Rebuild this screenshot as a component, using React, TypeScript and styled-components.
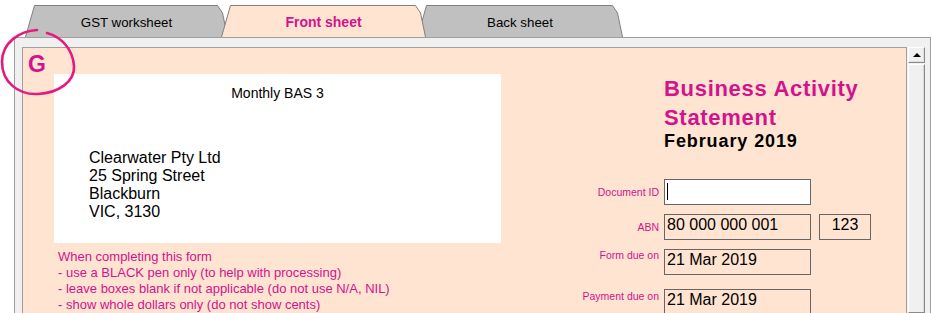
import React from "react";
import styled, { createGlobalStyle } from "styled-components";

const PINK = "#D2138C";
const PEACH = "#FFE4D1";
const LINE = "#A0A0A0";

const GlobalStyle = createGlobalStyle`
  html, body { margin: 0; padding: 0; background: #fff; overflow: hidden; }
  body { font-family: "Liberation Sans", Arial, sans-serif; color: #000; }
`;

const Page = styled.div`
  position: relative;
  width: 932px;
  height: 313px;
  overflow: hidden;
`;

const TabStrip = styled.div`
  display: flex;
  align-items: flex-end;
  height: 37px;
  padding-left: 25px;
  box-sizing: border-box;
`;

const Tab = styled.div<{ $w: number; $overlap: number; $active?: boolean }>`
  position: relative;
  width: ${(p) => p.$w}px;
  height: 32px;
  margin-left: ${(p) => -p.$overlap}px;
  z-index: ${(p) => (p.$active ? 2 : 1)};
  display: flex;
  align-items: center;
  justify-content: center;
  padding-top: 2px;
  box-sizing: border-box;
  font-size: ${(p) => (p.$active ? 14 : 13.3)}px;
  font-weight: ${(p) => (p.$active ? 700 : 400)};
  color: ${(p) => (p.$active ? PINK : "#000")};
`;

const TabShape = styled.svg`
  position: absolute;
  left: 0;
  top: 0;
  overflow: visible;
`;

const TabLabel = styled.span`
  position: relative;
`;

const Frame = styled.div`
  margin-left: 14px;
  width: 917px;
  height: 276px;
  box-sizing: border-box;
  border: 1px solid ${LINE};
  border-bottom: none;
  background: #f0f0f0;
  padding: 9px 5px 0 7px;
  display: flex;
  gap: 1px;
`;

const Panel = styled.div`
  flex: 0 0 885px;
  box-sizing: border-box;
  border: 1px solid ${LINE};
  border-bottom: none;
  background: ${PEACH};
  display: flex;
`;

const LeftCol = styled.div`
  width: 478px;
  display: flex;
  flex-direction: column;
`;

const GMark = styled.div`
  height: 26px;
  box-sizing: border-box;
  padding: 5px 0 0 5px;
  font-size: 23px;
  line-height: 23px;
  font-weight: 700;
  color: ${PINK};
`;

const AddressBox = styled.div`
  margin-left: 31px;
  width: 447px;
  height: 169px;
  box-sizing: border-box;
  background: #fff;
  padding-top: 11px;
`;

const BoxTitle = styled.div`
  text-align: center;
  font-size: 14px;
  line-height: 16px;
`;

const Address = styled.div`
  margin-top: 48px;
  padding-left: 35px;
  font-size: 16px;
  line-height: 18px;
`;

const Instructions = styled.div`
  margin: 6px 0 0 35px;
  font-size: 13px;
  line-height: 16px;
  color: ${PINK};
  white-space: nowrap;
`;

const RightCol = styled.div`
  flex: 1;
  padding-top: 26px;
  display: flex;
  flex-direction: column;
`;

const Title = styled.div`
  margin-left: 163px;
  font-size: 22px;
  line-height: 29px;
  font-weight: 700;
  letter-spacing: 0.7px;
  color: ${PINK};
`;

const Period = styled.div`
  margin: -1px 0 0 163px;
  font-size: 18px;
  line-height: 20px;
  font-weight: 700;
  letter-spacing: 0.9px;
`;

const FormRow = styled.div<{ $top: number; $align: "center" | "flex-start" }>`
  display: flex;
  align-items: ${(p) => p.$align};
  margin-top: ${(p) => p.$top}px;
`;

const Label = styled.div<{ $pad?: number }>`
  width: 158px;
  margin-right: 5px;
  padding-top: ${(p) => p.$pad ?? 0}px;
  text-align: right;
  font-size: 10.5px;
  line-height: 13px;
  color: ${PINK};
  white-space: nowrap;
`;

const Field = styled.div<{ $white?: boolean; $w?: number; $center?: boolean; $gap?: number }>`
  width: ${(p) => p.$w ?? 147}px;
  height: 26px;
  margin-left: ${(p) => p.$gap ?? 0}px;
  box-sizing: border-box;
  border: 1px solid #666;
  background: ${(p) => (p.$white ? "#fff" : "transparent")};
  padding: 1px 2px 0;
  font-size: 16px;
  line-height: 18px;
  text-align: ${(p) => (p.$center ? "center" : "left")};
  white-space: nowrap;
`;

const Caret = styled.div`
  width: 1px;
  height: 17px;
  margin-top: 2px;
  background: #000;
`;

const ScrollCol = styled.div`
  width: 17px;
  display: flex;
  flex-direction: column;
  gap: 1px;
`;

const ScrollButton = styled.div`
  height: 16px;
  box-sizing: border-box;
  background: #f0f0f0;
  border: 1px solid;
  border-color: #fff #8a8a8a #8a8a8a #fff;
  box-shadow: inset -1px -1px 0 #e0e0e0;
  display: flex;
  align-items: center;
  justify-content: center;
`;

const UpArrow = styled.div`
  width: 0;
  height: 0;
  border-left: 4px solid transparent;
  border-right: 4px solid transparent;
  border-bottom: 4px solid #000;
`;

const Thumb = styled.div`
  flex: 1;
  box-sizing: border-box;
  background: #f0f0f0;
  border: 1px solid;
  border-color: #fff #8a8a8a #8a8a8a #fff;
  box-shadow: inset -1px 0 0 #d8d8d8;
`;

const Circle = styled.svg`
  position: absolute;
  left: 0;
  top: 0;
  pointer-events: none;
  z-index: 5;
`;

type TabDef = { label: string; w: number; overlap: number; active?: boolean };

const tabs: TabDef[] = [
  { label: "GST worksheet", w: 203, overlap: 0 },
  { label: "Front sheet", w: 205, overlap: 7, active: true },
  { label: "Back sheet", w: 206, overlap: 9 },
];

function TabItem({ t }: { t: TabDef }) {
  const w = t.w;
  const fill = t.active ? PEACH : "#C0C0C0";
  const pts = `0.5,32 9.5,0.5 ${w - 10.5},0.5 ${w - 5.5},8 ${w - 0.5},32`;
  return (
    <Tab $w={w} $overlap={t.overlap} $active={t.active}>
      <TabShape width={w} height={32} viewBox={`0 0 ${w} 32`}>
        <polygon points={pts} fill={fill} stroke="none" />
        <polyline points={pts} fill="none" stroke="#808080" strokeWidth={1} />
      </TabShape>
      <TabLabel>{t.label}</TabLabel>
    </Tab>
  );
}

export default function App() {
  return (
    <Page>
      <GlobalStyle />
      <TabStrip>
        {tabs.map((t) => (
          <TabItem key={t.label} t={t} />
        ))}
      </TabStrip>
      <Frame>
        <Panel>
          <LeftCol>
            <GMark>G</GMark>
            <AddressBox>
              <BoxTitle>Monthly BAS 3</BoxTitle>
              <Address>
                <div>Clearwater Pty Ltd</div>
                <div>25 Spring Street</div>
                <div>Blackburn</div>
                <div>VIC, 3130</div>
              </Address>
            </AddressBox>
            <Instructions>
              <div>When completing this form</div>
              <div>- use a BLACK pen only (to help with processing)</div>
              <div>- leave boxes blank if not applicable (do not use N/A, NIL)</div>
              <div>- show whole dollars only (do not show cents)</div>
            </Instructions>
          </LeftCol>
          <RightCol>
            <Title>
              <div>Business Activity</div>
              <div>Statement</div>
            </Title>
            <Period>February 2019</Period>
            <FormRow $top={28} $align="center">
              <Label>Document ID</Label>
              <Field $white>
                <Caret />
              </Field>
            </FormRow>
            <FormRow $top={9} $align="center">
              <Label>ABN</Label>
              <Field>80 000 000 001</Field>
              <Field $w={52} $gap={8} $center>
                123
              </Field>
            </FormRow>
            <FormRow $top={9} $align="flex-start">
              <Label>Form due on</Label>
              <Field>21 Mar 2019</Field>
            </FormRow>
            <FormRow $top={14} $align="flex-start">
              <Label $pad={1}>Payment due on</Label>
              <Field>21 Mar 2019</Field>
            </FormRow>
          </RightCol>
        </Panel>
        <ScrollCol>
          <ScrollButton>
            <UpArrow />
          </ScrollButton>
          <Thumb />
        </ScrollCol>
      </Frame>
      <Circle width={90} height={110} viewBox="0 0 90 110">
        <path
          d="M 37 30 C 20 31, 2 42, 2 62 C 2 82, 18 95, 38 94 C 58 93, 75 82, 74 66 C 73 50, 62 37, 47 33"
          fill="none"
          stroke="#E6197E"
          strokeWidth={2.6}
          strokeLinecap="round"
        />
      </Circle>
    </Page>
  );
}
